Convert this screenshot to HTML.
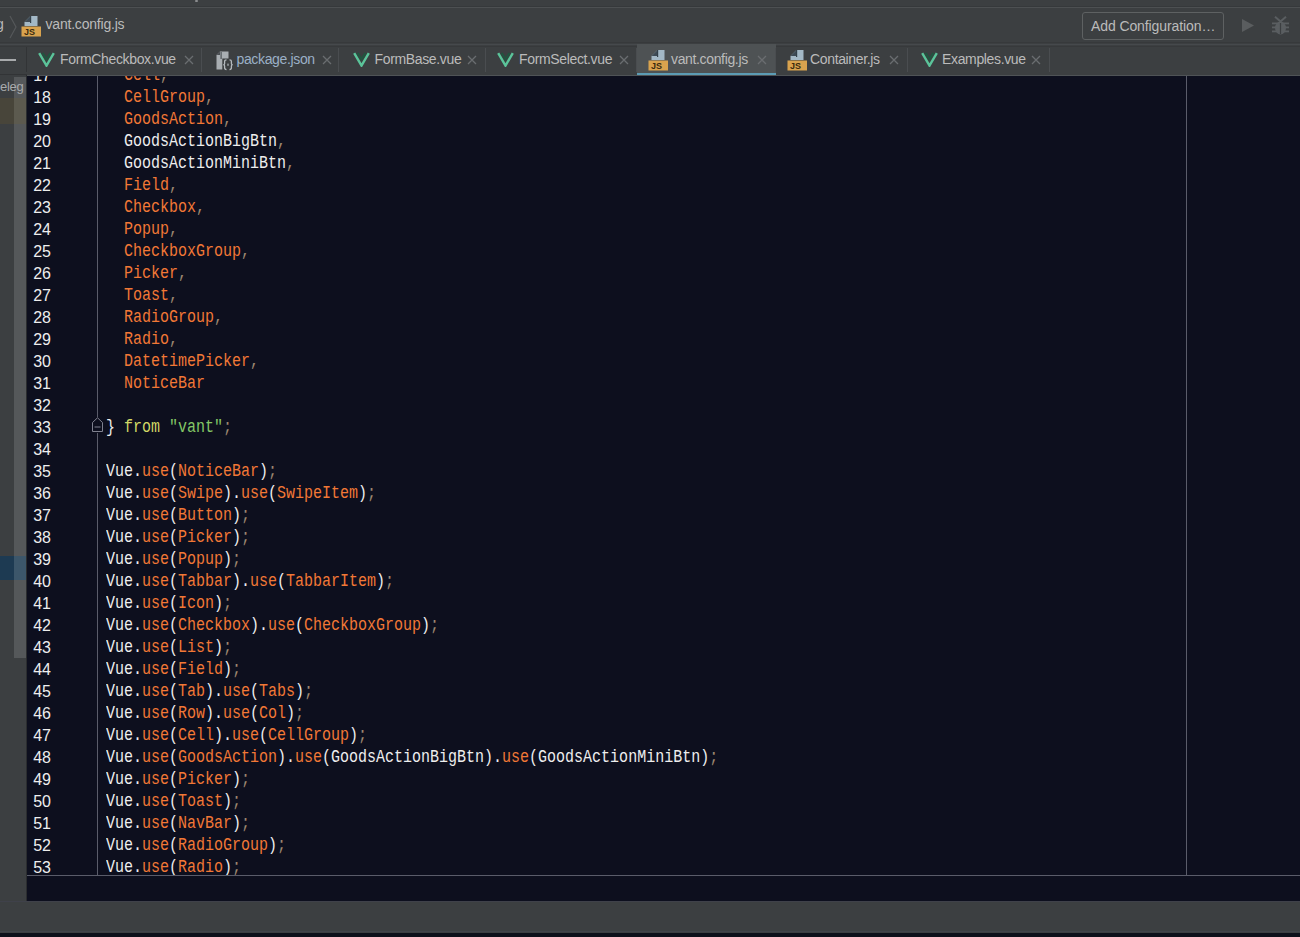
<!DOCTYPE html>
<html><head><meta charset="utf-8">
<style>
*{margin:0;padding:0;box-sizing:border-box}
html,body{width:1300px;height:937px;overflow:hidden;background:#3c3f41;font-family:"Liberation Sans",sans-serif;position:relative}
.abs{position:absolute}
.tt{font-size:14px;letter-spacing:-0.35px;line-height:16px;white-space:nowrap}
.code{position:absolute;left:0;top:0;font-family:"Liberation Mono",monospace;font-size:18px;white-space:pre;color:#eeeeee;transform:scaleX(0.83333);transform-origin:0 0}
.ln{position:absolute;font-family:"Liberation Sans",sans-serif;font-size:16.5px;color:#eeeeee;white-space:pre;transform:scaleX(0.97);transform-origin:100% 0}
.o{color:#f27836}
.p{color:#9c8670}
.s{color:#84c866}
.k{color:#d2d966}
</style></head>
<body>
<div class="abs" style="left:0;top:0;width:1300px;height:7px;background:#3c3f41"></div>
<div class="abs" style="left:0;top:6px;width:1300px;height:1px;background:#36393b"></div>
<div class="abs" style="left:0;top:7px;width:1300px;height:1px;background:#4d5052"></div>
<div class="abs" style="left:0;top:42px;width:1300px;height:1px;background:#37393b"></div>
<div class="abs" style="left:0;top:44px;width:1300px;height:1px;background:#46494c"></div>
<div class="abs" style="left:0;top:46px;width:1300px;height:1px;background:#37393b"></div>
<!-- nav -->
<div class="abs" style="left:195px;top:0;width:3px;height:2px;background:#8a8c8e;border-radius:1px"></div>
<div class="abs tt" style="left:-4px;top:16px;color:#bbbbbb">g</div>
<svg class="abs" style="left:8px;top:15px" width="10" height="24" viewBox="0 0 10 24"><path d="M2 1 L8 12 L2 23" fill="none" stroke="#55585a" stroke-width="1.2"/></svg>
<svg class="abs" style="left:21px;top:16px" width="21" height="21" viewBox="0 0 21 21"><path d="M3.5 6 L9.5 0 L16.5 0 L16.5 10 L3.5 10 Z" fill="#a3b8c6"/><path d="M3.5 6 L9.5 0 L9.5 6 Z" fill="#3e4a55"/><rect x="9" y="0" width="1.2" height="7" fill="#33404a"/><rect x="0.5" y="10.5" width="19.5" height="10" fill="#d9a34e"/><text x="3" y="19" font-family="Liberation Sans" font-weight="bold" font-size="9" fill="#3a2a0e">JS</text></svg>
<div class="abs tt" style="left:45.5px;top:16px;color:#bbbbbb;letter-spacing:-0.2px">vant.config.js</div>
<div class="abs" style="left:1082px;top:12px;width:142px;height:28px;border:1px solid #5e6162;border-radius:3px"></div>
<div class="abs tt" style="left:1091px;top:17.5px;color:#bbbbbb;letter-spacing:-0.1px">Add Configuration…</div>
<svg class="abs" style="left:1241px;top:18px" width="14" height="15" viewBox="0 0 14 15"><path d="M1 1 L13 7.5 L1 14 Z" fill="#5a5d5f"/></svg>
<svg class="abs" style="left:1272px;top:16px" width="17" height="19" viewBox="0 0 17 19"><g fill="#5a5e61"><path d="M3 0.8 L8.5 5.5 L14 0.8" fill="none" stroke="#5a5e61" stroke-width="2"/><ellipse cx="8.5" cy="12" rx="5.5" ry="6.5"/><rect x="0" y="6.5" width="17" height="1.8"/><rect x="0" y="10.5" width="17" height="1.8"/><rect x="0" y="14.5" width="17" height="1.8"/></g><rect x="7.9" y="7" width="1.2" height="11" fill="#3c3f41"/></svg>
<!-- tabs -->
<div class="abs" style="left:201px;top:48px;width:1px;height:24px;background:#4a4d50"></div>
<svg class="abs" style="left:38.3px;top:52.0px" width="17" height="15" viewBox="0 0 17 15"><path d="M4.6 1 L8.5 7.2 L12.4 1" fill="none" stroke="#21543f" stroke-width="2.2"/><path d="M1.2 1.2 L8.5 13.6 L15.8 1.2" fill="none" stroke="#5bc49a" stroke-width="2.4"/></svg>
<div class="abs tt" style="left:60.0px;top:50.5px;color:#bbbbbb">FormCheckbox.vue</div>
<svg class="abs" style="left:184.0px;top:55.0px" width="10" height="10" viewBox="0 0 10 10"><path d="M1 1 L9 9 M9 1 L1 9" stroke="#6a6d70" stroke-width="1.3"/></svg>
<div class="abs" style="left:338px;top:48px;width:1px;height:24px;background:#4a4d50"></div>
<svg class="abs" style="left:216.0px;top:51.0px" width="18" height="20" viewBox="0 0 18 20"><path d="M0.5 4 L4 0.5 L12.5 0.5 L12.5 18.5 L0.5 18.5 Z" fill="#a9aeb2"/><path d="M0.5 4 L4 0.5 L4 4 Z" fill="#4a4e52"/><rect x="4.5" y="1" width="1.2" height="7" fill="#4e5357"/><rect x="6.3" y="7.5" width="12" height="12.5" fill="#3c3f41"/><path d="M10.5 8.8 Q8.6 8.8 8.6 10.6 L8.6 12.4 Q8.6 13.7 7.3 13.7 Q8.6 13.7 8.6 15 L8.6 16.8 Q8.6 18.6 10.5 18.6 M13.5 8.8 Q15.4 8.8 15.4 10.6 L15.4 12.4 Q15.4 13.7 16.7 13.7 Q15.4 13.7 15.4 15 L15.4 16.8 Q15.4 18.6 13.5 18.6" fill="none" stroke="#b5babe" stroke-width="1.3"/><rect x="11.4" y="12.6" width="1.2" height="2.2" fill="#b5babe"/></svg>
<div class="abs tt" style="left:236.5px;top:50.5px;color:#9bb0c6">package.json</div>
<svg class="abs" style="left:322.0px;top:55.0px" width="10" height="10" viewBox="0 0 10 10"><path d="M1 1 L9 9 M9 1 L1 9" stroke="#6a6d70" stroke-width="1.3"/></svg>
<div class="abs" style="left:485px;top:48px;width:1px;height:24px;background:#4a4d50"></div>
<svg class="abs" style="left:352.8px;top:52.0px" width="17" height="15" viewBox="0 0 17 15"><path d="M4.6 1 L8.5 7.2 L12.4 1" fill="none" stroke="#21543f" stroke-width="2.2"/><path d="M1.2 1.2 L8.5 13.6 L15.8 1.2" fill="none" stroke="#5bc49a" stroke-width="2.4"/></svg>
<div class="abs tt" style="left:374.5px;top:50.5px;color:#bbbbbb">FormBase.vue</div>
<svg class="abs" style="left:466.5px;top:55.0px" width="10" height="10" viewBox="0 0 10 10"><path d="M1 1 L9 9 M9 1 L1 9" stroke="#6a6d70" stroke-width="1.3"/></svg>
<div class="abs" style="left:636px;top:48px;width:1px;height:24px;background:#4a4d50"></div>
<svg class="abs" style="left:497.3px;top:52.0px" width="17" height="15" viewBox="0 0 17 15"><path d="M4.6 1 L8.5 7.2 L12.4 1" fill="none" stroke="#21543f" stroke-width="2.2"/><path d="M1.2 1.2 L8.5 13.6 L15.8 1.2" fill="none" stroke="#5bc49a" stroke-width="2.4"/></svg>
<div class="abs tt" style="left:519.0px;top:50.5px;color:#bbbbbb">FormSelect.vue</div>
<svg class="abs" style="left:618.5px;top:55.0px" width="10" height="10" viewBox="0 0 10 10"><path d="M1 1 L9 9 M9 1 L1 9" stroke="#6a6d70" stroke-width="1.3"/></svg>
<div class="abs" style="left:637px;top:44px;width:139px;height:31px;background:#4e5254"></div>
<div class="abs" style="left:637px;top:73px;width:139px;height:3px;background:#5c9cb5"></div>
<div class="abs" style="left:775px;top:48px;width:1px;height:24px;background:#4a4d50"></div>
<svg class="abs" style="left:648px;top:50px" width="21" height="21" viewBox="0 0 21 21"><path d="M3.5 6 L9.5 0 L16.5 0 L16.5 10 L3.5 10 Z" fill="#a3b8c6"/><path d="M3.5 6 L9.5 0 L9.5 6 Z" fill="#3e4a55"/><rect x="9" y="0" width="1.2" height="7" fill="#33404a"/><rect x="0.5" y="10.5" width="19.5" height="10" fill="#d9a34e"/><text x="3" y="19" font-family="Liberation Sans" font-weight="bold" font-size="9" fill="#3a2a0e">JS</text></svg>
<div class="abs tt" style="left:671.0px;top:50.5px;color:#bbbbbb">vant.config.js</div>
<svg class="abs" style="left:757.0px;top:55.0px" width="10" height="10" viewBox="0 0 10 10"><path d="M1 1 L9 9 M9 1 L1 9" stroke="#6a6d70" stroke-width="1.3"/></svg>
<div class="abs" style="left:907px;top:48px;width:1px;height:24px;background:#4a4d50"></div>
<svg class="abs" style="left:787px;top:50px" width="21" height="21" viewBox="0 0 21 21"><path d="M3.5 6 L9.5 0 L16.5 0 L16.5 10 L3.5 10 Z" fill="#a3b8c6"/><path d="M3.5 6 L9.5 0 L9.5 6 Z" fill="#3e4a55"/><rect x="9" y="0" width="1.2" height="7" fill="#33404a"/><rect x="0.5" y="10.5" width="19.5" height="10" fill="#d9a34e"/><text x="3" y="19" font-family="Liberation Sans" font-weight="bold" font-size="9" fill="#3a2a0e">JS</text></svg>
<div class="abs tt" style="left:810.0px;top:50.5px;color:#bbbbbb">Container.js</div>
<svg class="abs" style="left:889.0px;top:55.0px" width="10" height="10" viewBox="0 0 10 10"><path d="M1 1 L9 9 M9 1 L1 9" stroke="#6a6d70" stroke-width="1.3"/></svg>
<div class="abs" style="left:1049px;top:48px;width:1px;height:24px;background:#4a4d50"></div>
<svg class="abs" style="left:920.5px;top:52.0px" width="17" height="15" viewBox="0 0 17 15"><path d="M4.6 1 L8.5 7.2 L12.4 1" fill="none" stroke="#21543f" stroke-width="2.2"/><path d="M1.2 1.2 L8.5 13.6 L15.8 1.2" fill="none" stroke="#5bc49a" stroke-width="2.4"/></svg>
<div class="abs tt" style="left:942.0px;top:50.5px;color:#bbbbbb">Examples.vue</div>
<svg class="abs" style="left:1031.0px;top:55.0px" width="10" height="10" viewBox="0 0 10 10"><path d="M1 1 L9 9 M9 1 L1 9" stroke="#6a6d70" stroke-width="1.3"/></svg>
<!-- side -->
<div class="abs" style="left:26px;top:47px;width:1px;height:25px;background:#323436"></div>
<div class="abs" style="left:0;top:59px;width:16px;height:2px;background:#a8aaac"></div>
<div class="abs" style="left:0;top:74px;width:27px;height:1px;background:#323436"></div>
<div class="abs" style="left:14px;top:77px;width:12px;height:581px;background:#55585a"></div>
<div class="abs" style="left:0;top:98px;width:14px;height:26px;background:#48453a"></div>
<div class="abs" style="left:14px;top:98px;width:12px;height:26px;background:#5c5a4f"></div>
<div class="abs" style="left:0;top:556px;width:14px;height:24px;background:#1d3a52"></div>
<div class="abs" style="left:14px;top:556px;width:12px;height:24px;background:#3c566a"></div>
<div class="abs tt" style="left:0px;top:79px;color:#a9abad;font-size:13px;letter-spacing:-0.3px">eleg</div>
<div class="abs" style="left:26px;top:75px;width:1px;height:826px;background:#2b2d2f"></div>
<!-- editor -->
<div class="abs" style="left:27px;top:75px;width:1273px;height:1px;background:#4f5356"></div>
<div class="abs" style="left:27px;top:76px;width:1273px;height:825px;background:#0d0f1e;overflow:hidden">
<div class="ln" style="left:0;top:-12.5px;width:24px;text-align:right;line-height:22px">17
18
19
20
21
22
23
24
25
26
27
28
29
30
31
32
33
34
35
36
37
38
39
40
41
42
43
44
45
46
47
48
49
50
51
52
53</div>
<div class="abs" style="left:70px;top:0;width:1px;height:800px;background:#5a5c6a"></div>
<svg class="abs" style="left:64px;top:341px" width="13" height="16" viewBox="0 0 13 16"><rect x="0" y="0" width="13" height="16" fill="#0d0f1e"/><path d="M1.5 14.5 L1.5 5.5 L6.5 0.8 L11.5 5.5 L11.5 14.5 Z" fill="none" stroke="#808290" stroke-width="1"/><path d="M3.5 10 L9.5 10" stroke="#808290" stroke-width="1"/></svg>
<div class="code" style="left:79px;top:-12.5px;line-height:22px">  <span class="o">Cell</span><span class="p">,</span>
  <span class="o">CellGroup</span><span class="p">,</span>
  <span class="o">GoodsAction</span><span class="p">,</span>
  GoodsActionBigBtn<span class="p">,</span>
  GoodsActionMiniBtn<span class="p">,</span>
  <span class="o">Field</span><span class="p">,</span>
  <span class="o">Checkbox</span><span class="p">,</span>
  <span class="o">Popup</span><span class="p">,</span>
  <span class="o">CheckboxGroup</span><span class="p">,</span>
  <span class="o">Picker</span><span class="p">,</span>
  <span class="o">Toast</span><span class="p">,</span>
  <span class="o">RadioGroup</span><span class="p">,</span>
  <span class="o">Radio</span><span class="p">,</span>
  <span class="o">DatetimePicker</span><span class="p">,</span>
  <span class="o">NoticeBar</span>

} <span class="k">from</span> <span class="s">"vant"</span><span class="p">;</span>

Vue.<span class="o">use</span>(<span class="o">NoticeBar</span>)<span class="p">;</span>
Vue.<span class="o">use</span>(<span class="o">Swipe</span>).<span class="o">use</span>(<span class="o">SwipeItem</span>)<span class="p">;</span>
Vue.<span class="o">use</span>(<span class="o">Button</span>)<span class="p">;</span>
Vue.<span class="o">use</span>(<span class="o">Picker</span>)<span class="p">;</span>
Vue.<span class="o">use</span>(<span class="o">Popup</span>)<span class="p">;</span>
Vue.<span class="o">use</span>(<span class="o">Tabbar</span>).<span class="o">use</span>(<span class="o">TabbarItem</span>)<span class="p">;</span>
Vue.<span class="o">use</span>(<span class="o">Icon</span>)<span class="p">;</span>
Vue.<span class="o">use</span>(<span class="o">Checkbox</span>).<span class="o">use</span>(<span class="o">CheckboxGroup</span>)<span class="p">;</span>
Vue.<span class="o">use</span>(<span class="o">List</span>)<span class="p">;</span>
Vue.<span class="o">use</span>(<span class="o">Field</span>)<span class="p">;</span>
Vue.<span class="o">use</span>(<span class="o">Tab</span>).<span class="o">use</span>(<span class="o">Tabs</span>)<span class="p">;</span>
Vue.<span class="o">use</span>(<span class="o">Row</span>).<span class="o">use</span>(<span class="o">Col</span>)<span class="p">;</span>
Vue.<span class="o">use</span>(<span class="o">Cell</span>).<span class="o">use</span>(<span class="o">CellGroup</span>)<span class="p">;</span>
Vue.<span class="o">use</span>(<span class="o">GoodsAction</span>).<span class="o">use</span>(GoodsActionBigBtn).<span class="o">use</span>(GoodsActionMiniBtn)<span class="p">;</span>
Vue.<span class="o">use</span>(<span class="o">Picker</span>)<span class="p">;</span>
Vue.<span class="o">use</span>(<span class="o">Toast</span>)<span class="p">;</span>
Vue.<span class="o">use</span>(<span class="o">NavBar</span>)<span class="p">;</span>
Vue.<span class="o">use</span>(<span class="o">RadioGroup</span>)<span class="p">;</span>
Vue.<span class="o">use</span>(<span class="o">Radio</span>)<span class="p">;</span></div>
<div class="abs" style="left:1159px;top:0;width:1px;height:800px;background:#5a5c6a"></div>
<div class="abs" style="left:0;top:799px;width:1273px;height:1px;background:#5a5c6a"></div>
</div>
<div class="abs" style="left:0;top:901px;width:1300px;height:32px;background:#3c3f41"></div>
<div class="abs" style="left:0;top:901px;width:1300px;height:1px;background:#3f414a"></div>
<div class="abs" style="left:0;top:931px;width:1300px;height:1px;background:#41434b"></div>
<div class="abs" style="left:0;top:933px;width:1300px;height:4px;background:#0e101b"></div>
</body></html>
